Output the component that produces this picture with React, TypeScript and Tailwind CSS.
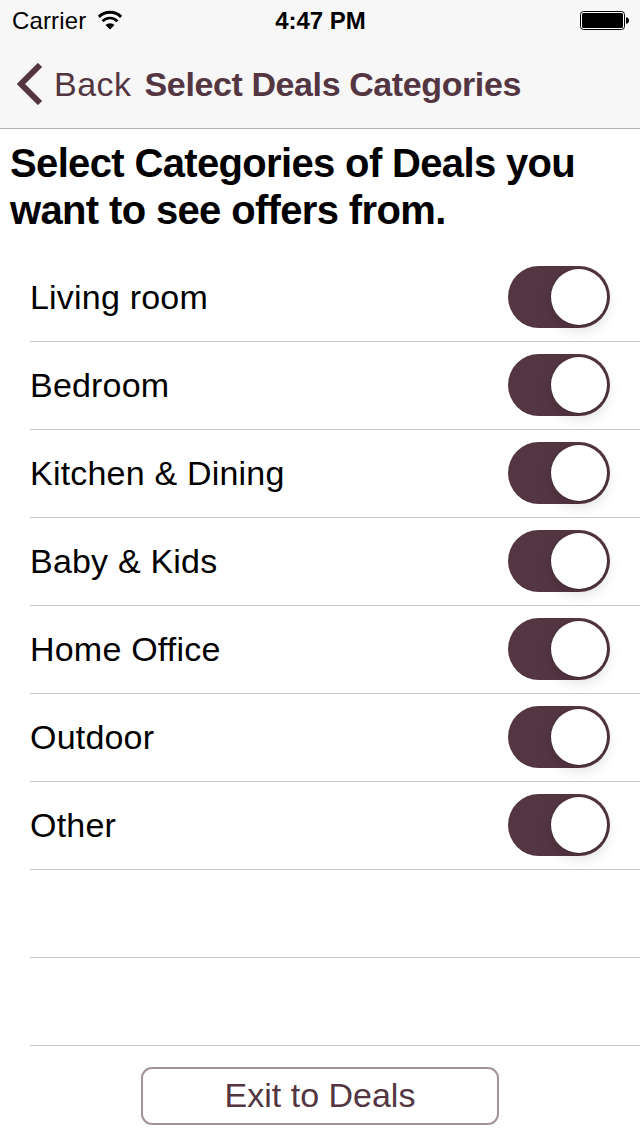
import { useState } from 'react'

const CATEGORIES = [
  'Living room',
  'Bedroom',
  'Kitchen & Dining',
  'Baby & Kids',
  'Home Office',
  'Outdoor',
  'Other',
]

function StatusBar() {
  return (
    <div className="grid h-10 grid-cols-3 items-center pl-3 pr-[11px] text-black">
      <div className="flex h-10 items-center gap-[11px]">
        <span className="pt-0.5 text-[24px] leading-[38px] tracking-[0.15px]">Carrier</span>
        <svg width="26" height="20" viewBox="0 0 26 20" fill="none" stroke="#000">
          <path d="M1.9 6.9A15.6 15.6 0 0 1 24.1 6.9" strokeWidth="3" />
          <path d="M5.6 11.2A10.2 10.2 0 0 1 20.4 11.2" strokeWidth="2.7" />
          <path d="M13 19.4L8.5 15A6.4 6.4 0 0 1 17.5 15Z" fill="#000" stroke="none" />
        </svg>
      </div>
      <span className="pt-0.5 text-center text-[24px] font-bold leading-[38px]">4:47 PM</span>
      <svg className="justify-self-end" width="49" height="20" viewBox="0 -1 49 20">
        <rect x="0.5" y="0.5" width="44" height="18" rx="3" fill="#fff" stroke="#000" />
        <rect x="2" y="2" width="41" height="15" rx="1.5" fill="#000" />
        <path d="M46 6.2C48 6.5 49 7.5 49 9.5S48 12.5 46 12.8Z" fill="#000" />
      </svg>
    </div>
  )
}

function NavBar() {
  return (
    <div className="flex h-22 items-center pl-[17px] text-[34px] text-[#533642]">
      <button className="flex items-center gap-[11px]">
        <svg width="26" height="42" viewBox="0 0 26 42" fill="none" stroke="currentColor" strokeWidth="6">
          <path d="M23 2L4 21L23 40" />
        </svg>
        <span className="tracking-[0.5px]">Back</span>
      </button>
      <h1 className="ml-[13px] whitespace-nowrap font-bold tracking-[-0.4px]">Select Deals Categories</h1>
    </div>
  )
}

function Toggle({ on, onClick }: { on: boolean; onClick: () => void }) {
  return (
    <button
      role="switch"
      aria-checked={on}
      onClick={onClick}
      className={`flex h-[62px] w-[102px] items-center rounded-full px-[3px] ${on ? 'justify-end bg-[#533642]' : 'justify-start bg-[#e5e5e5]'}`}
    >
      <span className="h-14 w-14 rounded-full bg-white shadow-[0_5px_14px_rgba(0,0,0,0.14),0_0_2px_rgba(0,0,0,0.25)]" />
    </button>
  )
}

export default function App() {
  const [selected, setSelected] = useState<string[]>(CATEGORIES)

  const toggleCategory = (name: string) => {
    setSelected(prev => (prev.includes(name) ? prev.filter(c => c !== name) : [...prev, name]))
  }

  return (
    <div className="flex h-[1136px] w-[640px] flex-col overflow-hidden bg-white font-['Liberation_Sans',Arial,sans-serif]">
      <header className="h-[129px] border-b border-[#b2b2b2] bg-[#f7f7f7]">
        <StatusBar />
        <NavBar />
      </header>

      <h2 className="h-[125px] whitespace-nowrap pl-[10px] pt-[11px] text-[40px] font-bold leading-[47px] tracking-[-0.65px] text-black">
        Select Categories of Deals you
        <br />
        want to see offers from.
      </h2>

      <ul className="pl-[30px]">
        {CATEGORIES.map(name => (
          <li key={name} className="flex h-22 items-center justify-between border-b border-[#c8c7cc] pb-px pr-[30px]">
            <span className="pt-px text-[34px] tracking-[0.2px] text-black">{name}</span>
            <Toggle on={selected.includes(name)} onClick={() => toggleCategory(name)} />
          </li>
        ))}
        {/* empty rows */}
        <li className="h-22 border-b border-[#c8c7cc]" />
        <li className="h-22 border-b border-[#c8c7cc]" />
      </ul>

      <button className="mt-[21px] h-[58px] w-[358px] self-center rounded-[11px] border-2 border-[#a3929a] pb-0.5 text-[34px] text-[#533642]">
        Exit to Deals
      </button>
    </div>
  )
}
